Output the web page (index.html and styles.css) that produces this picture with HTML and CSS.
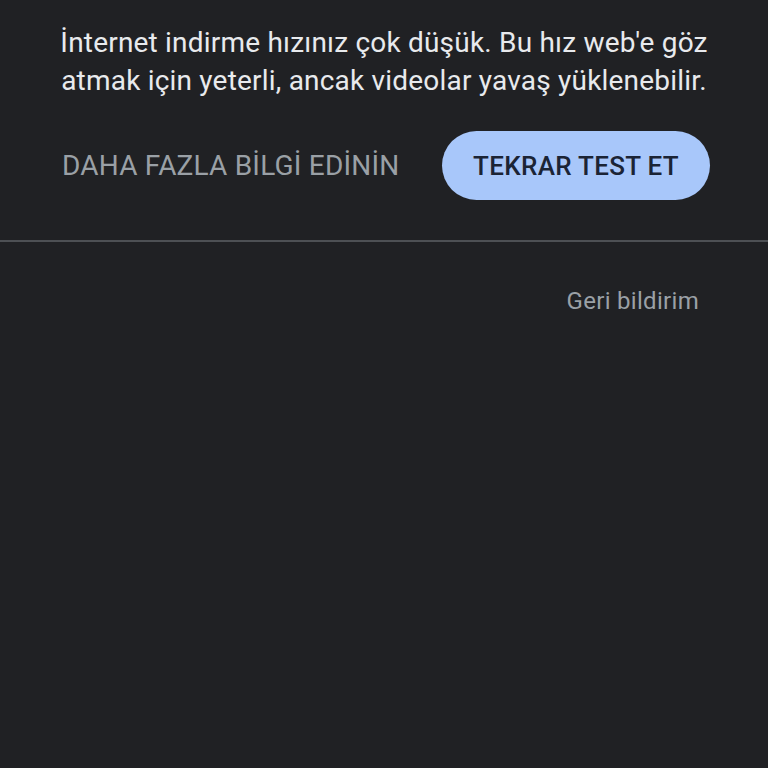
FILE: index.html
```html
<!DOCTYPE html>
<html lang="tr">
<head>
    <meta charset="UTF-8">
    <meta name="viewport" content="width=device-width, initial-scale=1.0">
    <title>Hız testi</title>
    <link rel="stylesheet" href="styles.css">
</head>
<body>
    <div class="result">
        <p class="message">İnternet indirme hızınız çok düşük. Bu hız web'e göz atmak için yeterli, ancak videolar yavaş yüklenebilir.</p>
        <div class="actions">
            <a class="link-button" href="#">DAHA FAZLA BİLGİ EDİNİN</a>
            <button class="retry">TEKRAR TEST ET</button>
        </div>
    </div>
    <div class="footer">
        <a class="feedback" href="#">Geri bildirim</a>
    </div>
</body>
</html>
```

FILE: styles.css
```css
body {
    margin: 0;
    background-color: #202124;
    color: #e8eaed;
    font-family: Roboto, "Noto Sans", sans-serif;
}
.result {
    padding: 24px 40px 40px;
    border-bottom: 2px solid #4d5054;
}
.message {
    max-width: 680px;
    margin: 0 auto;
    font-size: 28px;
    line-height: 38px;
    letter-spacing: 0.2px;
    text-align: center;
}
.actions {
    display: flex;
    align-items: center;
    justify-content: space-between;
    margin-top: 31px;
    padding: 0 18px 0 22px;
}
.link-button {
    color: #9aa0a6;
    font-size: 28px;
    letter-spacing: 0.2px;
    text-decoration: none;
}
.retry {
    width: 268px;
    height: 69px;
    border: none;
    border-radius: 35px;
    background-color: #a8c7fa;
    color: #1b2435;
    font-family: inherit;
    font-size: 26px;
    font-weight: 500;
    letter-spacing: 0.3px;
}
.footer {
    display: flex;
    justify-content: flex-end;
    padding: 45px 69px 0 0;
}
.feedback {
    color: #9aa0a6;
    font-size: 24px;
    letter-spacing: 0.3px;
    text-decoration: none;
}
```
